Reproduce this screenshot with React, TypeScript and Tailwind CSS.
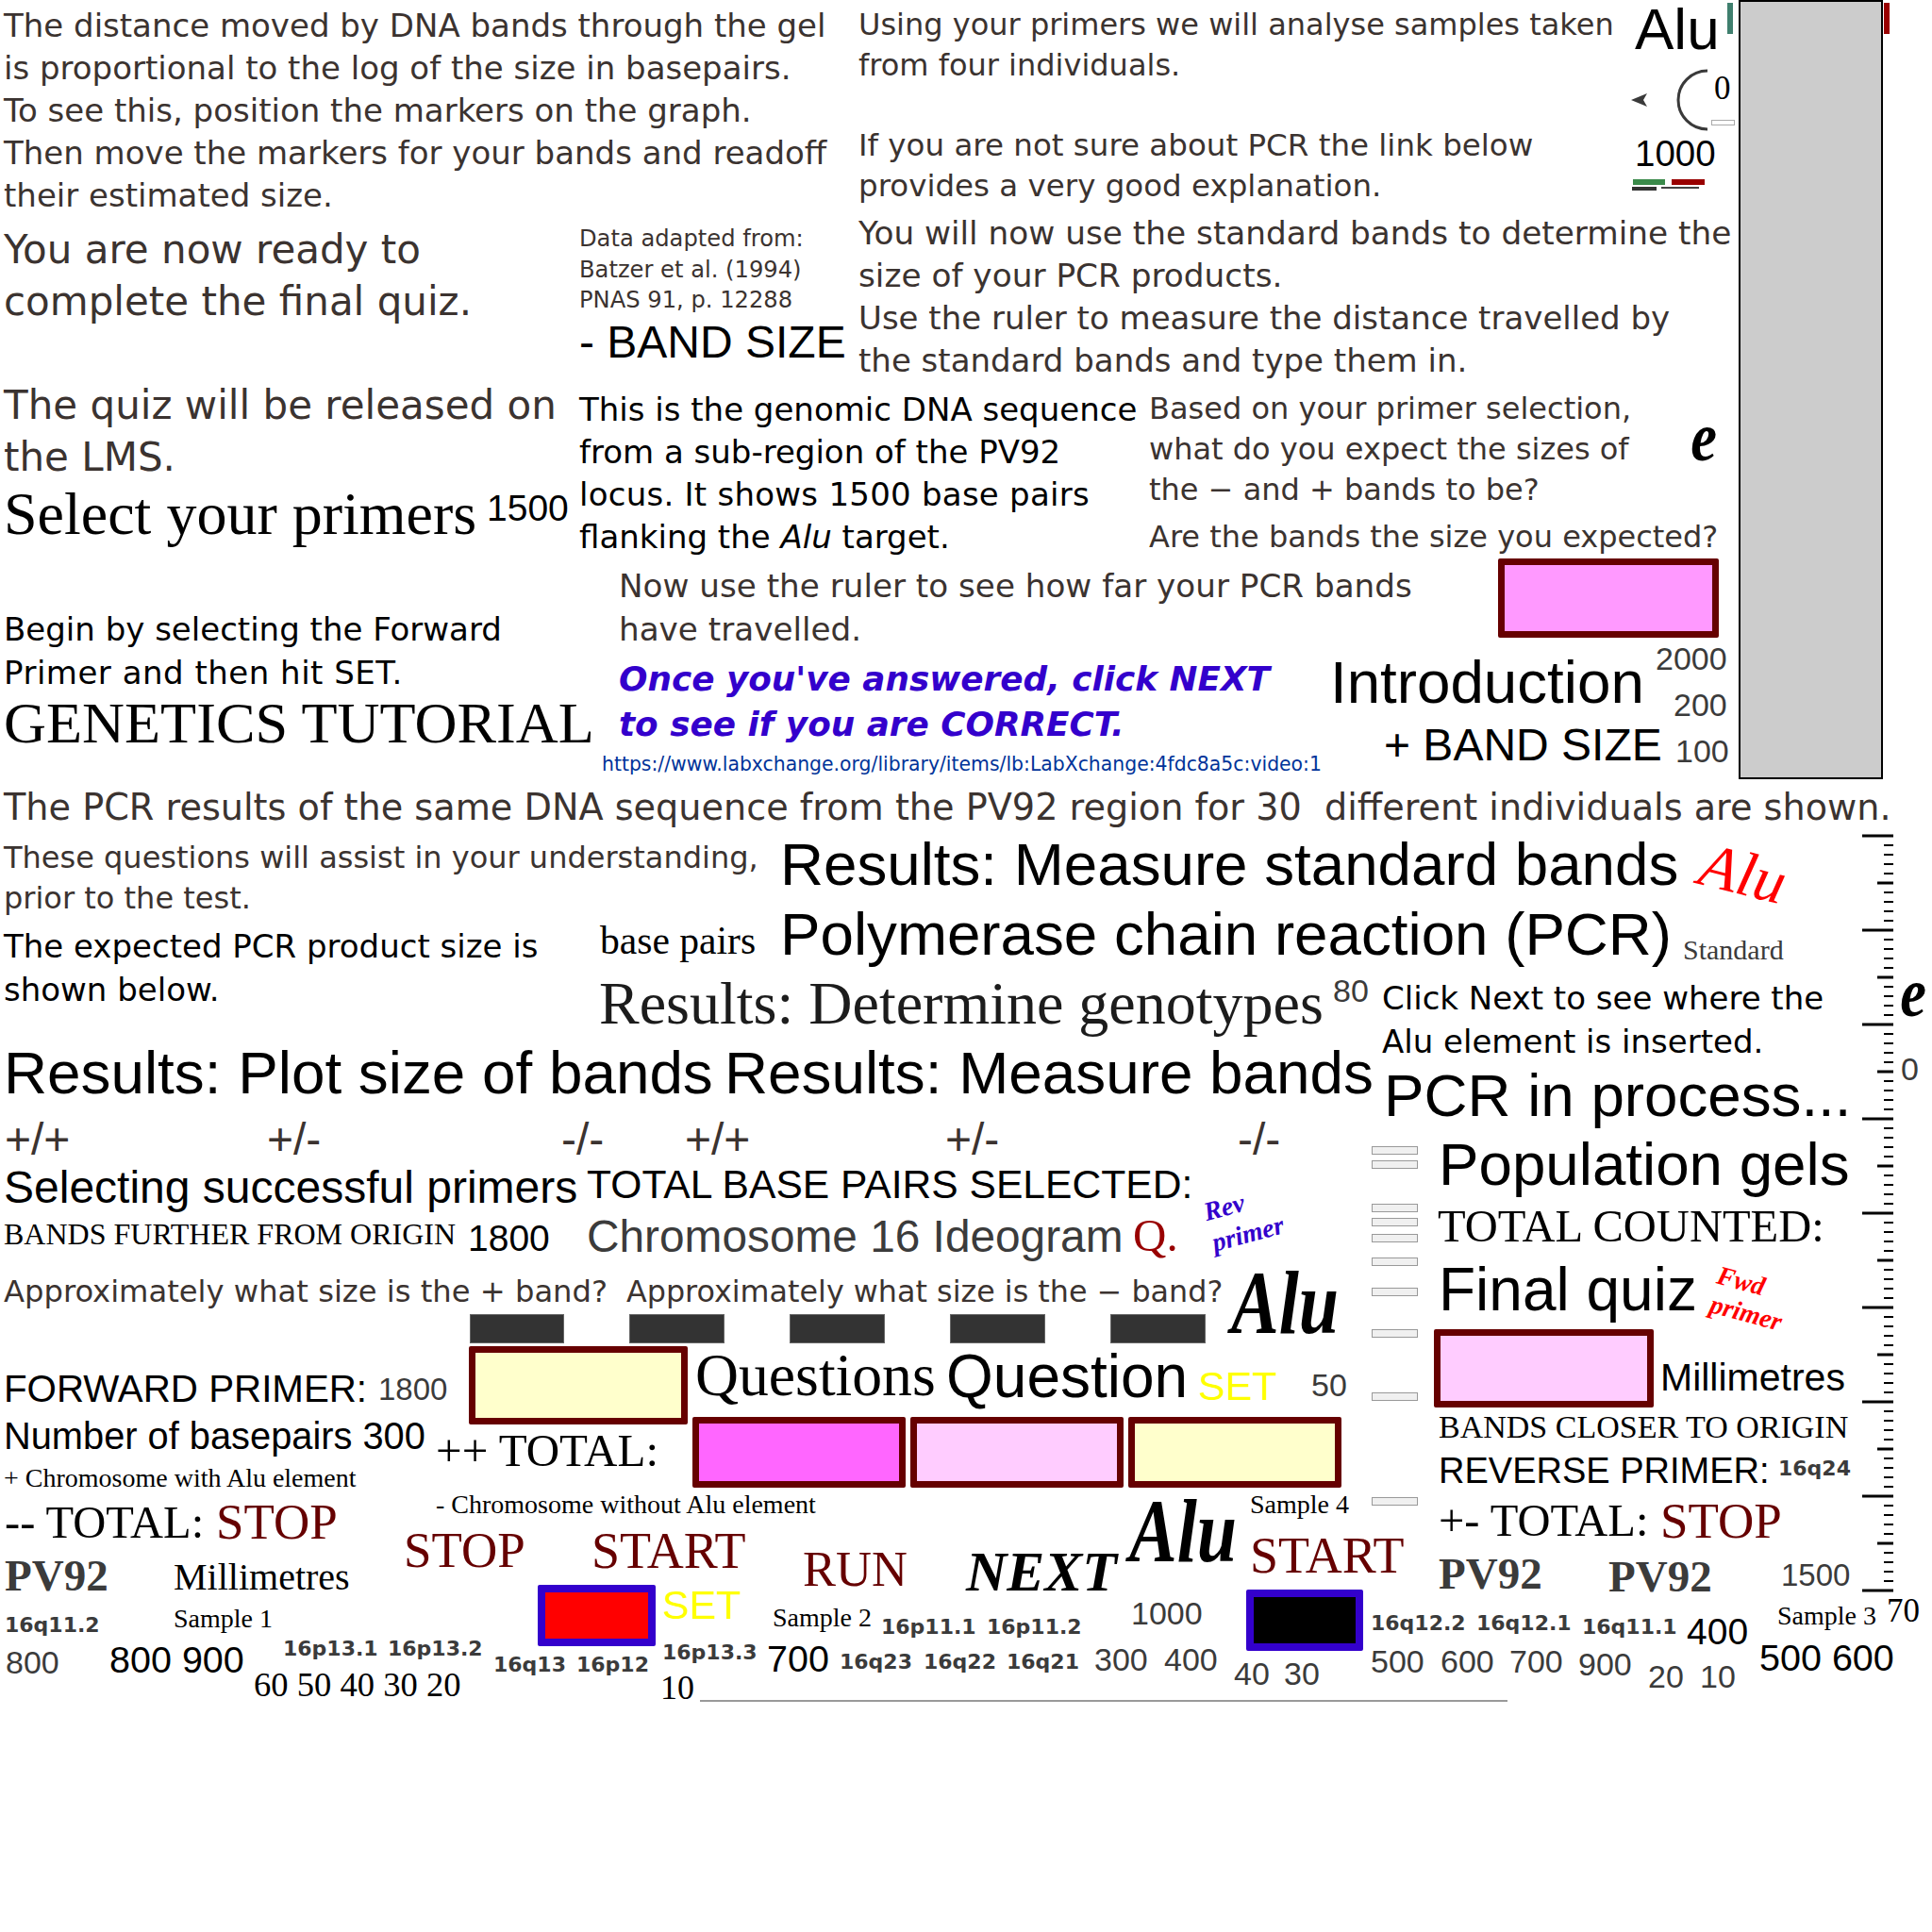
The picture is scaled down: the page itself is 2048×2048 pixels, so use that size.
import React from "react";

const sans = "font-['Liberation_Sans',sans-serif]";
const serif = "font-['Liberation_Serif',serif]";
const deja = "font-['DejaVu_Sans',sans-serif]";

// every sprite on the sheet: classes + text
const labels: [string, string][] = [
  // left column
  [`${deja} text-[#3b3330] left-[4px] top-[5px] text-[34px] leading-[45px]`, "The distance moved by DNA bands through the gel\nis proportional to the log of the size in basepairs.\nTo see this, position the markers on the graph.\nThen move the markers for your bands and readoff\ntheir estimated size."],
  [`${deja} text-[#3b3330] left-[4px] top-[237px] text-[42px] leading-[55px]`, "You are now ready to\ncomplete the final quiz."],
  [`${deja} text-[#3b3330] left-[4px] top-[402px] text-[42px] leading-[55px]`, "The quiz will be released on\nthe LMS."],
  [`${serif} text-black left-[4px] top-[513px] text-[64px]`, "Select your primers"],
  [`${sans} text-black left-[516px] top-[519px] text-[39px]`, "1500"],
  [`${deja} text-black left-[4px] top-[644px] text-[34px] leading-[46px]`, "Begin by selecting the Forward"],
  [`${deja} text-black left-[4px] top-[690px] text-[34px] leading-[46px] tracking-[0.5px]`, "Primer and then hit SET."],
  [`${serif} text-black left-[4px] top-[735px] text-[62.3px]`, "GENETICS TUTORIAL"],
  [`${deja} text-[#3b3330] left-[614px] top-[237px] text-[24.2px] leading-[32.5px]`, "Data adapted from:\nBatzer et al. (1994)\nPNAS 91, p. 12288"],
  [`${sans} text-black left-[614px] top-[339px] text-[48px]`, "- BAND SIZE"],
  // upper middle
  [`${deja} text-[#3b3330] left-[910px] top-[5px] text-[32px] leading-[43px]`, "Using your primers we will analyse samples taken\nfrom four individuals."],
  [`${deja} text-[#3b3330] left-[910px] top-[133px] text-[32.5px] leading-[43px]`, "If you are not sure about PCR the link below\nprovides a very good explanation."],
  [`${deja} text-[#3b3330] left-[910px] top-[225px] text-[34.3px] leading-[44.5px]`, "You will now use the standard bands to determine the\nsize of your PCR products."],
  [`${deja} text-[#3b3330] left-[910px] top-[315px] text-[34px] leading-[44.5px]`, "Use the ruler to measure the distance travelled by\nthe standard bands and type them in."],
  [`${sans} text-black left-[1733px] top-[0px] text-[62px]`, "Alu"],
  [`${serif} text-black left-[1817px] top-[76px] text-[35px]`, "0"],
  [`${sans} text-black left-[1733px] top-[144px] text-[38.5px]`, "1000"],
  [`${deja} text-black left-[614px] top-[412px] text-[34px] leading-[45px]`, "This is the genomic DNA sequence\nfrom a sub-region of the PV92"],
  [`${deja} text-black left-[614px] top-[502px] text-[34px] leading-[45px] tracking-[0.25px]`, "locus. It shows 1500 base pairs"],
  [`${deja} text-[#3b3330] left-[1218px] top-[412px] text-[32px] leading-[43px]`, "Based on your primer selection,\nwhat do you expect the sizes of\nthe − and + bands to be?"],
  [`${deja} text-[#3b3330] left-[1218px] top-[553px] text-[32px]`, "Are the bands the size you expected?"],
  [`${deja} text-[#3b3330] left-[656px] top-[598px] text-[34.2px] leading-[46px]`, "Now use the ruler to see how far your PCR bands\nhave travelled."],
  [`${deja} text-[#3300cc] font-bold italic left-[656px] top-[696px] text-[35.8px] leading-[48px]`, "Once you've answered, click NEXT\nto see if you are CORRECT."],
  [`${deja} text-[#003399] left-[638px] top-[800px] text-[20.4px]`, "https://www.labxchange.org/library/items/lb:LabXchange:4fdc8a5c:video:1"],
  [`${sans} text-black left-[1410px] top-[691px] text-[63.7px]`, "Introduction"],
  [`${sans} text-black left-[1467px] top-[766px] text-[48px]`, "+ BAND SIZE"],
  [`${sans} text-[#3b3b3b] left-[1755px] top-[681px] text-[34px]`, "2000"],
  [`${sans} text-[#3b3b3b] left-[1774px] top-[730px] text-[34px]`, "200"],
  [`${sans} text-[#3b3b3b] left-[1776px] top-[779px] text-[34px]`, "100"],
  // middle band
  [`${deja} text-[#3b3330] left-[4px] top-[837px] text-[38.2px]`, "The PCR results of the same DNA sequence from the PV92 region for 30  different individuals are shown."],
  [`${deja} text-[#3b3330] left-[4px] top-[888px] text-[32px] leading-[43px]`, "These questions will assist in your understanding,\nprior to the test."],
  [`${deja} text-black left-[4px] top-[980px] text-[34px] leading-[46px]`, "The expected PCR product size is\nshown below."],
  [`${serif} text-black left-[636px] top-[977px] text-[41.6px]`, "base pairs"],
  [`${sans} text-black left-[827px] top-[884px] text-[63.7px]`, "Results: Measure standard bands"],
  [`${sans} text-black left-[827px] top-[958px] text-[63.7px]`, "Polymerase chain reaction (PCR)"],
  [`${serif} text-[#3b3b3b] left-[1784px] top-[992px] text-[30px]`, "Standard"],
  [`${serif} text-[#1c1c1c] left-[635px] top-[1032px] text-[64px]`, "Results: Determine genotypes"],
  [`${sans} text-[#3b3b3b] left-[1413px] top-[1033px] text-[34px]`, "80"],
  [`${deja} text-black left-[1465px] top-[1035px] text-[34px] leading-[46px]`, "Click Next to see where the\nAlu element is inserted."],
  [`${sans} text-black left-[4px] top-[1106px] text-[63.8px]`, "Results: Plot size of bands"],
  [`${sans} text-black left-[768px] top-[1106px] text-[63.8px]`, "Results: Measure bands"],
  [`${sans} text-black left-[1467px] top-[1129px] text-[63.7px]`, "PCR in process..."],
  [`${sans} text-[#3b3b3b] left-[2015px] top-[1116px] text-[34px]`, "0"],
  [`${sans} text-[#3b3330] left-[5px] top-[1184px] text-[48px]`, "+/+"],
  [`${sans} text-[#3b3330] left-[283px] top-[1184px] text-[48px]`, "+/-"],
  [`${sans} text-[#3b3330] left-[595px] top-[1184px] text-[48px]`, "-/-"],
  [`${sans} text-[#3b3330] left-[726px] top-[1184px] text-[48px]`, "+/+"],
  [`${sans} text-[#3b3330] left-[1002px] top-[1184px] text-[48px]`, "+/-"],
  [`${sans} text-[#3b3330] left-[1312px] top-[1184px] text-[48px]`, "-/-"],
  [`${sans} text-black left-[4px] top-[1235px] text-[48px]`, "Selecting successful primers"],
  [`${sans} text-black left-[622px] top-[1234px] text-[42.6px]`, "TOTAL BASE PAIRS SELECTED:"],
  [`${serif} text-black left-[4px] top-[1292px] text-[32px]`, "BANDS FURTHER FROM ORIGIN"],
  [`${sans} text-black left-[496px] top-[1293px] text-[39px]`, "1800"],
  [`${sans} text-[#3b3b3b] left-[622px] top-[1287px] text-[47.8px]`, "Chromosome 16 Ideogram"],
  [`${serif} text-[#990000] left-[1201px] top-[1285px] text-[49px]`, "Q."],
  [`${deja} text-[#3b3330] left-[4px] top-[1353px] text-[32.2px]`, "Approximately what size is the + band?"],
  [`${deja} text-[#3b3330] left-[664px] top-[1353px] text-[31.8px]`, "Approximately what size is the − band?"],
  [`${sans} text-black left-[4px] top-[1453px] text-[40.3px]`, "FORWARD PRIMER:"],
  [`${sans} text-[#3b3b3b] left-[401px] top-[1456px] text-[33px]`, "1800"],
  [`${sans} text-black left-[4px] top-[1503px] text-[39.8px]`, "Number of basepairs 300"],
  [`${serif} text-black left-[4px] top-[1553px] text-[28px]`, "+ Chromosome with Alu element"],
  [`${serif} text-black left-[462px] top-[1513px] text-[49px]`, "++ TOTAL:"],
  [`${serif} text-black left-[737px] top-[1426px] text-[63.7px]`, "Questions"],
  [`${sans} text-black left-[1003px] top-[1427px] text-[64px]`, "Question"],
  [`${sans} text-[#ffff00] left-[1270px] top-[1448px] text-[43px]`, "SET"],
  [`${sans} text-[#3b3b3b] left-[1390px] top-[1451px] text-[34px]`, "50"],
  // right column
  [`${sans} text-black left-[1525px] top-[1202px] text-[63.7px]`, "Population gels"],
  [`${serif} text-black left-[1524px] top-[1276px] text-[48.5px]`, "TOTAL COUNTED:"],
  [`${sans} text-black left-[1525px] top-[1335px] text-[64px]`, "Final quiz"],
  [`${sans} text-black left-[1760px] top-[1440px] text-[41px]`, "Millimetres"],
  [`${serif} text-black left-[1525px] top-[1496px] text-[34px]`, "BANDS CLOSER TO ORIGIN"],
  [`${sans} text-black left-[1525px] top-[1540px] text-[38px]`, "REVERSE PRIMER:"],
  [`${deja} text-[#3b3b3b] font-bold left-[1885px] top-[1546px] text-[22px]`, "16q24"],
  [`${serif} text-black left-[1525px] top-[1588px] text-[48.5px]`, "+- TOTAL:"],
  [`${serif} text-[#660000] left-[1760px] top-[1586px] text-[53px]`, "STOP"],
  [`${serif} text-[#3b3b3b] font-bold left-[1525px] top-[1645px] text-[47px]`, "PV92"],
  [`${serif} text-[#3b3b3b] font-bold left-[1705px] top-[1648px] text-[47px]`, "PV92"],
  [`${sans} text-[#3b3b3b] left-[1888px] top-[1653px] text-[33px]`, "1500"],
  [`${serif} text-black left-[1884px] top-[1699px] text-[28px]`, "Sample 3"],
  [`${serif} text-black left-[2000px] top-[1690px] text-[35px]`, "70"],
  [`${sans} text-black left-[1788px] top-[1710px] text-[39px]`, "400"],
  [`${sans} text-black left-[1865px] top-[1738px] text-[39.5px]`, "500 600"],
  // bottom rows
  [`${serif} text-black left-[5px] top-[1590px] text-[48.5px]`, "-- TOTAL:"],
  [`${serif} text-[#660000] left-[229px] top-[1587px] text-[53px]`, "STOP"],
  [`${serif} text-black left-[462px] top-[1581px] text-[28px]`, "- Chromosome without Alu element"],
  [`${serif} text-[#660000] left-[428px] top-[1617px] text-[53px]`, "STOP"],
  [`${serif} text-[#660000] left-[627px] top-[1617px] text-[54px]`, "START"],
  [`${serif} text-[#3b3b3b] font-bold left-[5px] top-[1647px] text-[47px]`, "PV92"],
  [`${serif} text-black left-[184px] top-[1652px] text-[40px]`, "Millimetres"],
  [`${serif} text-black left-[184px] top-[1702px] text-[28px]`, "Sample 1"],
  [`${deja} text-[#3b3b3b] font-bold left-[5px] top-[1712px] text-[22px]`, "16q11.2"],
  [`${sans} text-[#3b3b3b] left-[6px] top-[1745px] text-[34px]`, "800"],
  [`${sans} text-black left-[116px] top-[1740px] text-[39.5px]`, "800 900"],
  [`${deja} text-[#3b3b3b] font-bold left-[300px] top-[1737px] text-[22px]`, "16p13.1"],
  [`${deja} text-[#3b3b3b] font-bold left-[411px] top-[1737px] text-[22px]`, "16p13.2"],
  [`${serif} text-black left-[269px] top-[1768px] text-[36.6px]`, "60 50 40 30 20"],
  [`${deja} text-[#3b3b3b] font-bold left-[523px] top-[1754px] text-[22px]`, "16q13"],
  [`${deja} text-[#3b3b3b] font-bold left-[611px] top-[1754px] text-[22px]`, "16p12"],
  [`${deja} text-[#3b3b3b] font-bold left-[702px] top-[1741px] text-[22px]`, "16p13.3"],
  [`${serif} text-black left-[700px] top-[1771px] text-[36px]`, "10"],
  [`${sans} text-[#ffff00] left-[702px] top-[1680px] text-[43px]`, "SET"],
  [`${serif} text-[#660000] left-[851px] top-[1637px] text-[52.5px]`, "RUN"],
  [`${serif} text-black font-bold italic left-[1024px] top-[1636px] text-[60px]`, "NEXT"],
  [`${serif} text-black left-[1325px] top-[1581px] text-[28px]`, "Sample 4"],
  [`${serif} text-[#660000] left-[1325px] top-[1622px] text-[54px]`, "START"],
  [`${serif} text-black left-[819px] top-[1701px] text-[28px]`, "Sample 2"],
  [`${deja} text-[#3b3b3b] font-bold left-[934px] top-[1714px] text-[22px]`, "16p11.1"],
  [`${deja} text-[#3b3b3b] font-bold left-[1046px] top-[1714px] text-[22px]`, "16p11.2"],
  [`${sans} text-black left-[813px] top-[1739px] text-[39.5px]`, "700"],
  [`${deja} text-[#3b3b3b] font-bold left-[890px] top-[1751px] text-[22px]`, "16q23"],
  [`${deja} text-[#3b3b3b] font-bold left-[979px] top-[1751px] text-[22px]`, "16q22"],
  [`${deja} text-[#3b3b3b] font-bold left-[1067px] top-[1751px] text-[22px]`, "16q21"],
  [`${sans} text-[#3b3b3b] left-[1199px] top-[1693px] text-[34px]`, "1000"],
  [`${sans} text-[#3b3b3b] left-[1160px] top-[1742px] text-[34px]`, "300"],
  [`${sans} text-[#3b3b3b] left-[1234px] top-[1742px] text-[34px]`, "400"],
  [`${sans} text-[#3b3b3b] left-[1308px] top-[1757px] text-[34px]`, "40"],
  [`${sans} text-[#3b3b3b] left-[1361px] top-[1757px] text-[34px]`, "30"],
  [`${deja} text-[#3b3b3b] font-bold left-[1453px] top-[1710px] text-[22px]`, "16q12.2"],
  [`${deja} text-[#3b3b3b] font-bold left-[1565px] top-[1710px] text-[22px]`, "16q12.1"],
  [`${deja} text-[#3b3b3b] font-bold left-[1677px] top-[1714px] text-[22px]`, "16q11.1"],
  [`${sans} text-[#3b3b3b] left-[1453px] top-[1744px] text-[34px]`, "500"],
  [`${sans} text-[#3b3b3b] left-[1527px] top-[1744px] text-[34px]`, "600"],
  [`${sans} text-[#3b3b3b] left-[1600px] top-[1744px] text-[34px]`, "700"],
  [`${sans} text-[#3b3b3b] left-[1673px] top-[1747px] text-[34px]`, "900"],
  [`${sans} text-[#3b3b3b] left-[1747px] top-[1760px] text-[34px]`, "20"],
  [`${sans} text-[#3b3b3b] left-[1802px] top-[1760px] text-[34px]`, "10"],
];

// coloured answer boxes and flat bars
const boxes: string[] = [
  "left-[1843px] top-0 w-[153px] h-[826px] bg-[#cccccc] border-2 border-black",
  "left-[1831px] top-[3px] w-[6px] h-[33px] bg-[#3f7f6e]",
  "left-[1997px] top-[3px] w-[6px] h-[33px] bg-[#990000]",
  "left-[1814px] top-[127px] w-[25px] h-[6px] bg-white border border-[#aaaaaa]",
  "left-[1731px] top-[190px] w-[34px] h-[6px] bg-[#3a8a4a]",
  "left-[1772px] top-[190px] w-[35px] h-[6px] bg-[#990000]",
  "left-[1730px] top-[198px] w-[26px] h-[4px] bg-[#333333]",
  "left-[1761px] top-[198px] w-[40px] h-[2px] bg-[#444444]",
  "left-[1588px] top-[592px] w-[234px] h-[84px] bg-[#ff99ff] border-[7px] border-[#660000] rounded-[2px]",
  "left-[498px] top-[1393px] w-[100px] h-[31px] bg-[#333333] border border-[#666666]",
  "left-[667px] top-[1393px] w-[101px] h-[31px] bg-[#333333] border border-[#666666]",
  "left-[837px] top-[1393px] w-[101px] h-[31px] bg-[#333333] border border-[#666666]",
  "left-[1007px] top-[1393px] w-[101px] h-[31px] bg-[#333333] border border-[#666666]",
  "left-[1177px] top-[1393px] w-[101px] h-[31px] bg-[#333333] border border-[#666666]",
  "left-[497px] top-[1427px] w-[232px] h-[83px] bg-[#ffffcc] border-[7px] border-[#660000] rounded-[2px]",
  "left-[734px] top-[1502px] w-[226px] h-[75px] bg-[#ff66ff] border-[7px] border-[#660000] rounded-[2px]",
  "left-[965px] top-[1502px] w-[226px] h-[75px] bg-[#ffccff] border-[7px] border-[#660000] rounded-[2px]",
  "left-[1196px] top-[1502px] w-[226px] h-[75px] bg-[#ffffcc] border-[7px] border-[#660000] rounded-[2px]",
  "left-[1520px] top-[1409px] w-[233px] h-[83px] bg-[#ffccff] border-[7px] border-[#660000] rounded-[2px]",
  "left-[570px] top-[1680px] w-[125px] h-[65px] bg-[#ff0000] border-[8px] border-[#3300cc] rounded-[2px]",
  "left-[1321px] top-[1685px] w-[124px] h-[65px] bg-black border-[8px] border-[#3300cc] rounded-[2px]",
  "left-[742px] top-[1802px] w-[856px] h-[2px] bg-[#999999]",
];

// gel ladder rungs
const rungs: string[] = [
  "top-[1215px]", "top-[1230px]", "top-[1276px]", "top-[1291px]", "top-[1308px]",
  "top-[1333px]", "top-[1365px]", "top-[1409px]", "top-[1476px]", "top-[1587px]",
];

const Ruler = () => (
  <svg className="absolute left-[1974px] top-[884px]" width="34" height="806" viewBox="0 0 34 806">
    {Array.from({ length: 81 }, (_, i) => {
      const y = 2 + i * 10;
      const major = i % 10 === 0;
      const mid = i % 5 === 0;
      return (
        <line
          key={i}
          x1={major ? 0 : mid ? 16 : 23}
          x2={33}
          y1={y}
          y2={y}
          stroke="#000"
          strokeWidth={major || mid ? 3 : 2}
        />
      );
    })}
  </svg>
);

export default function App() {
  return (
    <div className="relative w-[2048px] h-[2048px] overflow-hidden bg-white">
      {boxes.map((b) => (
        <div key={b} className={`absolute box-border ${b}`} />
      ))}
      {rungs.map((r) => (
        <div key={r} className={`absolute left-[1454px] w-[49px] h-[9px] bg-[#f0f0f0] border border-[#999999] ${r}`} />
      ))}
      {labels.map(([c, t]) => (
        <div key={c} className={`absolute whitespace-pre ${c.includes("leading-[") ? "" : "leading-none"} ${c}`}>
          {t}
        </div>
      ))}
      <div className={`absolute whitespace-pre left-[614px] top-[547px] text-[34px] leading-[45px] text-black ${deja}`}>
        flanking the <i>Alu</i> target.
      </div>

      {/* tilted captions */}
      <div className={`absolute leading-none italic text-[#ff0000] left-[1802px] top-[893px] text-[66px] rotate-[14deg] ${serif}`}>Alu</div>
      <div className={`absolute leading-none italic font-bold text-[#3300cc] left-[1276px] top-[1266px] text-[28px] rotate-[-15deg] ${serif}`}>Rev</div>
      <div className={`absolute leading-none italic font-bold text-[#3300cc] left-[1284px] top-[1294px] text-[28px] rotate-[-15deg] ${serif}`}>primer</div>
      <div className={`absolute leading-none italic font-bold text-[#ff0000] left-[1820px] top-[1344px] text-[28px] rotate-[15deg] ${serif}`}>Fwd</div>
      <div className={`absolute leading-none italic font-bold text-[#ff0000] left-[1812px] top-[1378px] text-[28px] rotate-[15deg] ${serif}`}>primer</div>

      {/* hand written marks */}
      <div className={`absolute leading-none italic font-bold text-black left-[1305px] top-[1342px] text-[76px] scale-y-125 ${serif}`}>Alu</div>
      <div className={`absolute leading-none italic font-bold text-black left-[1197px] top-[1584px] text-[76px] scale-y-125 ${serif}`}>Alu</div>
      <div className={`absolute leading-none italic font-bold text-black left-[1795px] top-[437px] text-[50px] scale-x-125 scale-y-150 ${serif}`}>e</div>
      <div className={`absolute leading-none italic font-bold text-black left-[2017px] top-[1026px] text-[50px] scale-x-125 scale-y-150 ${serif}`}>e</div>

      {/* arrow + arc */}
      <svg className="absolute left-[1729px] top-[99px]" width="17" height="14" viewBox="0 0 17 14">
        <polygon points="0,7 17,0 13,7 17,14" fill="#3a3a3a" />
      </svg>
      <svg className="absolute left-[1777px] top-[73px]" width="36" height="66" viewBox="0 0 36 66">
        <path d="M33 2 A31 31 0 0 0 33 64" fill="none" stroke="#3a3a3a" strokeWidth="3" />
      </svg>

      <Ruler />
    </div>
  );
}
